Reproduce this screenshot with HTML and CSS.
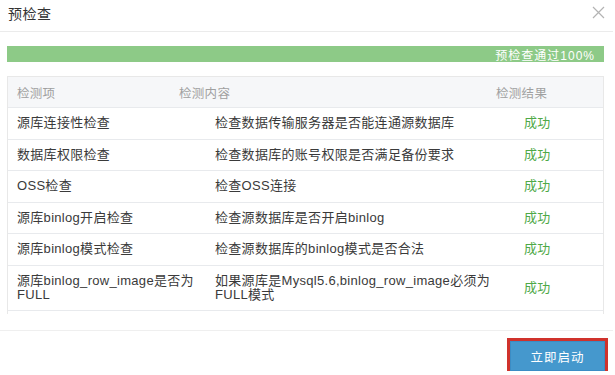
FILE: index.html
```html
<!DOCTYPE html>
<html lang="zh-CN">
<head>
    <meta charset="UTF-8">
    <title>预检查</title>
    <link rel="stylesheet" href="styles.css">
</head>
<body>

    <div class="modal">
        <div class="modal-header">
            <span class="modal-title">预检查</span>
            <svg class="close-icon" width="13" height="13" viewBox="0 0 13 13">
                <path d="M1 1 L12 12 M12 1 L1 12" stroke="#b3b3b3" stroke-width="1.2" fill="none"/>
            </svg>
        </div>

        <div class="modal-body">
            <div class="progress">
                <span class="progress-text">预检查通过100%</span>
            </div>

            <div class="check-table">
                <div class="check-head">
                    <span>检测项</span>
                    <span>检测内容</span>
                    <span>检测结果</span>
                </div>
                <div class="check-row">
                    <span>源库连接性检查</span>
                    <span>检查数据传输服务器是否能连通源数据库</span>
                    <span class="ok">成功</span>
                </div>
                <div class="check-row">
                    <span>数据库权限检查</span>
                    <span>检查数据库的账号权限是否满足备份要求</span>
                    <span class="ok">成功</span>
                </div>
                <div class="check-row">
                    <span>OSS检查</span>
                    <span>检查OSS连接</span>
                    <span class="ok">成功</span>
                </div>
                <div class="check-row">
                    <span>源库binlog开启检查</span>
                    <span>检查源数据库是否开启binlog</span>
                    <span class="ok">成功</span>
                </div>
                <div class="check-row">
                    <span>源库binlog模式检查</span>
                    <span>检查源数据库的binlog模式是否合法</span>
                    <span class="ok">成功</span>
                </div>
                <div class="check-row">
                    <span>源库binlog_row_image是否为FULL</span>
                    <span>如果源库是Mysql5.6,binlog_row_image必须为FULL模式</span>
                    <span class="ok">成功</span>
                </div>
            </div>
        </div>

        <div class="modal-footer">
            <button class="start-btn">立即启动</button>
        </div>
    </div>

</body>
</html>
```

FILE: styles.css
```css
body {
    margin: 0;
    background-color: #fff;
    font-family: "Liberation Sans", "Noto Sans CJK SC", sans-serif;
    color: #333;
}

.modal {
    width: 613px;
    background: #fff;
}

.modal-header {
    height: 31px;
    padding: 0 8px 0 8px;
    display: flex;
    align-items: center;
    justify-content: space-between;
    border-bottom: 1px solid #ebebeb;
}

.modal-title {
    font-size: 14px;
    letter-spacing: 0.5px;
    margin-top: -5px;
}

.close-icon {
    margin-top: -6px;
}

.modal-body {
    padding: 14px 9px 0 7px;
}

.progress {
    height: 16px;
    background-color: #8dca87;
    display: flex;
    align-items: center;
    justify-content: flex-end;
    padding-right: 9px;
}

.progress-text {
    color: #fff;
    font-size: 12px;
    letter-spacing: 1px;
}

.check-table {
    margin-top: 14px;
    border: 1px solid #e8e8e8;
    border-bottom: none;
    padding-bottom: 3px;
    font-size: 13px;
    letter-spacing: 0.3px;
    color: #3a3a3a;
}

.check-head {
    display: grid;
    grid-template-columns: 162px 317px 1fr;
    height: 30px;
    align-items: center;
    background-color: #f6f7f9;
    border-bottom: 1px solid #e8eaed;
    color: #a0a0a0;
    font-size: 12.5px;
}

.check-head span {
    padding-left: 9px;
}

.check-row {
    display: grid;
    grid-template-columns: 198px 308px 1fr;
    align-items: center;
    line-height: 14px;
    padding: 8.25px 0;
    border-bottom: 1px solid #e8eaed;
}

.check-row span {
    padding-left: 9px;
    padding-right: 8px;
}

.check-row .ok {
    color: #4fa947;
    padding-left: 10px;
}

.modal-footer {
    margin-top: 16px;
    border-top: 1px solid #efefef;
    display: flex;
    justify-content: flex-end;
    padding: 10px 8px 0 0;
}

.start-btn {
    width: 95px;
    height: 30px;
    background-color: #4598cd;
    border: 1px solid #3b8cc4;
    color: #fff;
    font-family: "Liberation Sans", "Noto Sans CJK SC", sans-serif;
    font-size: 12.5px;
    letter-spacing: 1px;
    outline: 3px solid #d0322c;
    cursor: pointer;
}
```
